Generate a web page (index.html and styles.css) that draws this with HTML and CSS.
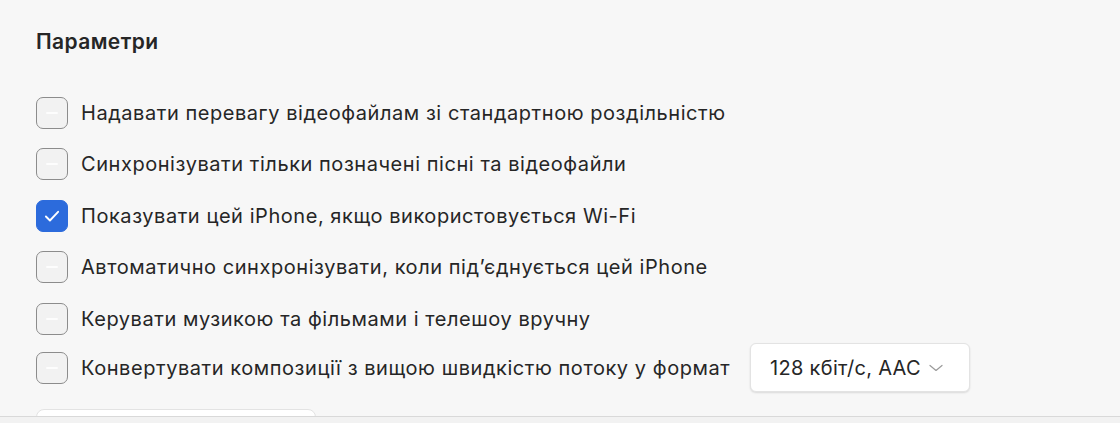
FILE: index.html
```html
<!DOCTYPE html>
<html lang="uk">
<head>
    <meta charset="UTF-8">
    <meta name="viewport" content="width=device-width, initial-scale=1.0">
    <title>Параметри</title>
    <link rel="stylesheet" href="styles.css">
</head>
<body>
    <div class="pane">
        <h2>Параметри</h2>
        <div class="options">
            <label class="option">
                <input type="checkbox">
                <span class="box"></span>
                Надавати перевагу відеофайлам зі стандартною роздільністю
            </label>
            <label class="option">
                <input type="checkbox">
                <span class="box"></span>
                Синхронізувати тільки позначені пісні та відеофайли
            </label>
            <label class="option">
                <input type="checkbox" checked>
                <span class="box">
                    <svg viewBox="0 0 32 32" width="32" height="32"><path d="M9.5 16.5 L13.8 20.8 L22.5 11.5" fill="none" stroke="#fff" stroke-width="2" stroke-linecap="round" stroke-linejoin="round"/></svg>
                </span>
                Показувати цей iPhone, якщо використовується Wi-Fi
            </label>
            <label class="option">
                <input type="checkbox">
                <span class="box"></span>
                Автоматично синхронізувати, коли під’єднується цей iPhone
            </label>
            <label class="option">
                <input type="checkbox">
                <span class="box"></span>
                Керувати музикою та фільмами і телешоу вручну
            </label>
            <label class="option bitrate">
                <input type="checkbox">
                <span class="box"></span>
                Конвертувати композиції з вищою швидкістю потоку у формат
                <button type="button" class="select">128 кбіт/с, AAC
                    <svg viewBox="0 0 14 8" width="14" height="8"><path d="M1 1.5 L7 6.5 L13 1.5" fill="none" stroke="#9a9a9a" stroke-width="1.2" stroke-linecap="round" stroke-linejoin="round"/></svg>
                </button>
            </label>
        </div>
        <div class="wide-btn"></div>
    </div>
    <div class="footer"></div>
</body>
</html>
```
FILE: styles.css
```css
html, body {
    height: 100%;
}
body {
    margin: 0;
    font-family: 'Inter', 'Liberation Sans', Arial, sans-serif;
    background-color: #f7f7f7;
    color: #262626;
    overflow: hidden;
    display: flex;
    flex-direction: column;
}
.pane {
    height: 416px;
    overflow: hidden;
    padding: 0 36px;
    box-sizing: border-box;
}
h2 {
    margin: 30px 0 0;
    font-size: 21px;
    font-weight: 600;
    line-height: 24px;
    letter-spacing: 0.4px;
}
.options {
    margin-top: 43px;
    display: flex;
    flex-direction: column;
    gap: 19.4px;
}
.option {
    display: flex;
    align-items: center;
    gap: 13px;
    height: 32px;
    font-size: 20px;
    letter-spacing: 0.55px;
    cursor: pointer;
}
.option.bitrate {
    margin-top: -2px;
}
.option input {
    display: none;
}
.box {
    width: 32px;
    height: 32px;
    box-sizing: border-box;
    border: 1.5px solid #8c8c8c;
    border-radius: 7px;
    background-color: #f2f2f2;
    display: flex;
    align-items: center;
    justify-content: center;
    flex-shrink: 0;
}
.box::after {
    content: "";
    width: 12px;
    height: 2px;
    border-radius: 1px;
    background-color: #fdfdfd;
}
.option input:checked + .box {
    background-color: #2c6bdc;
    border-color: #2c6bdc;
}
.option input:checked + .box::after {
    display: none;
}
.select {
    margin-left: 7px;
    height: 49px;
    width: 220px;
    padding: 0 0 0 19px;
    display: flex;
    align-items: center;
    gap: 8px;
    border: 1px solid #e3e3e3;
    border-radius: 6px;
    background-color: white;
    box-shadow: 0 1px 2px rgba(0, 0, 0, 0.12);
    font-family: inherit;
    font-size: 20px;
    letter-spacing: 0.3px;
    color: #262626;
}
.wide-btn {
    margin-top: 25px;
    width: 280px;
    height: 40px;
    box-sizing: border-box;
    border: 1px solid #e3e3e3;
    border-radius: 8px;
    background-color: white;
}
.footer {
    flex: 1;
    border-top: 1px solid #d9d9d9;
    background-color: #f2f2f2;
}
```
